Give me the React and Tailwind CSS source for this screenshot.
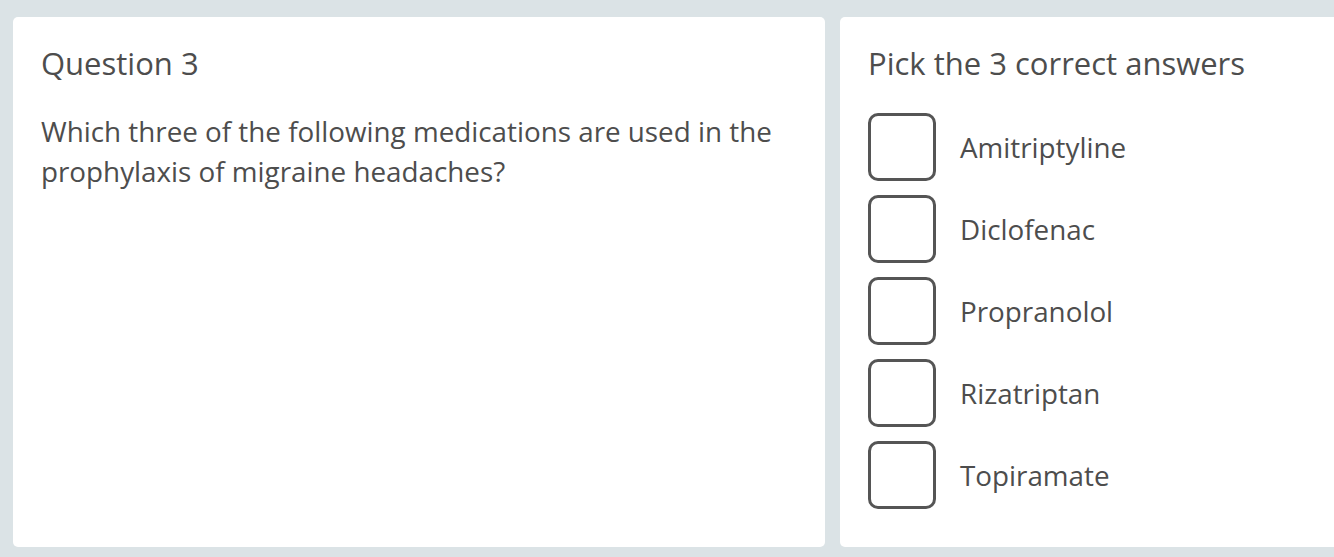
import React from 'react';

const options = ['Amitriptyline', 'Diclofenac', 'Propranolol', 'Rizatriptan', 'Topiramate'];

const App = () => {
    return (
        <div
            className="h-[557px] w-[1334px] overflow-hidden bg-[#dbe3e6] pt-[17px] pb-[10px] pl-[13px] flex gap-[15px] text-[#4d4d4d]"
            style={{ fontFamily: '"Open Sans", "Noto Sans", sans-serif' }}
        >
            {/* Question */}
            <div className="w-[812px] shrink-0 bg-white rounded-[5px] px-[28px] pt-[25px]">
                <h2 className="text-[31px] leading-[42px]">Question 3</h2>
                <p className="mt-[27px] text-[27.8px] leading-[40px]">
                    Which three of the following medications are used in the prophylaxis of migraine headaches?
                </p>
            </div>

            {/* Answers */}
            <div className="w-[540px] shrink-0 bg-white rounded-[5px] px-[28px] pt-[25px]">
                <h2 className="text-[31px] leading-[42px]">Pick the 3 correct answers</h2>
                <div className="mt-[29px] flex flex-col gap-[14px]">
                    {options.map((opt) => (
                        <label key={opt} className="flex items-center gap-[24px] cursor-pointer">
                            <span className="w-[68px] h-[68px] rounded-[10px] border-[3px] border-[#555555] shrink-0" />
                            <span className="text-[27.8px] leading-[40px]">{opt}</span>
                        </label>
                    ))}
                </div>
            </div>
        </div>
    );
};

export default App;
